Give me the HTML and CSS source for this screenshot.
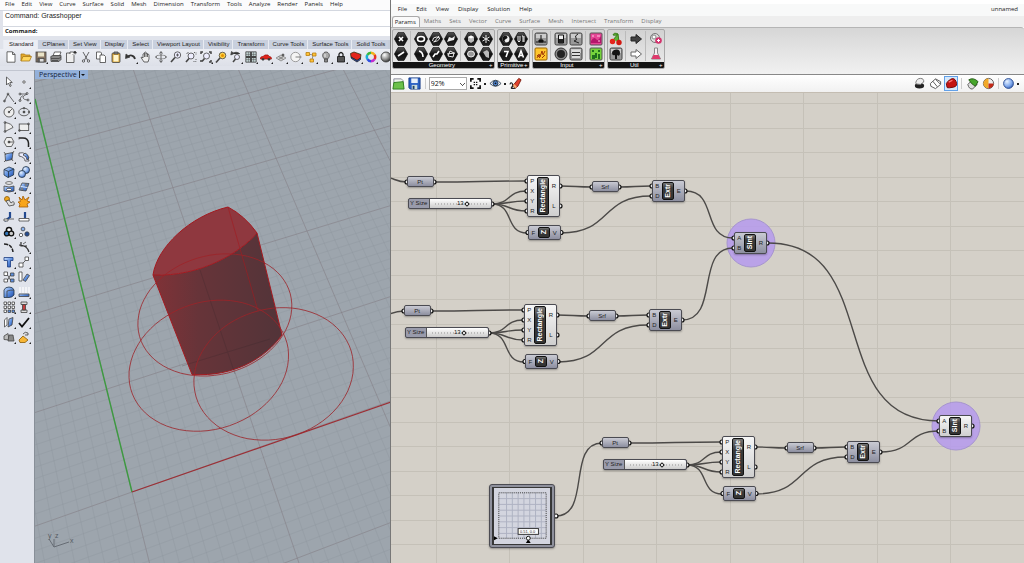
FILE: index.html
```html
<!DOCTYPE html>
<html lang="en">
<head>
<meta charset="utf-8">
<title>Rhino and Grasshopper</title>
<link rel="stylesheet" href="styles.css">
</head>
<body>
<svg class="defs" aria-hidden="true">
  <defs>
    <linearGradient id="hexFill" x1="0" y1="0" x2="0" y2="1"><stop offset="0" stop-color="#555"/><stop offset=".5" stop-color="#111"/><stop offset="1" stop-color="#222"/></linearGradient>
    <linearGradient id="blueFill" x1="0" y1="0" x2="1" y2="1"><stop offset="0" stop-color="#cfe2ff"/><stop offset=".5" stop-color="#5d8fe0"/><stop offset="1" stop-color="#1f4aa5"/></linearGradient>
    <radialGradient id="ballFill" cx=".35" cy=".3" r=".8"><stop offset="0" stop-color="#fff"/><stop offset=".5" stop-color="#999"/><stop offset="1" stop-color="#222"/></radialGradient>
    <radialGradient id="blueBall" cx=".35" cy=".3" r=".8"><stop offset="0" stop-color="#e8f2ff"/><stop offset=".6" stop-color="#7fa8ec"/><stop offset="1" stop-color="#2d55a8"/></radialGradient>
    <symbol id="hex" viewBox="0 0 14 14"><path d="M4 .6h6L13.6 7 10 13.4H4L.4 7z" fill="url(#hexFill)" stroke="#000" stroke-width=".6"/></symbol>
    <symbol id="tile" viewBox="0 0 14 14"><rect x="1" y="1" width="12" height="12" rx="1.5" fill="#999" stroke="#444"/><path d="M2 2h10v4H2z" fill="#ccc"/></symbol>
    <linearGradient id="bodyFill" x1="0" y1="0" x2="1" y2="0"><stop offset="0" stop-color="#813237"/><stop offset=".35" stop-color="#673439"/><stop offset="1" stop-color="#523439"/></linearGradient>
  </defs>
</svg>
<div class="desktop">
  <section class="rhino">
    <nav class="menu rhino-menu">
      <button>File</button><button>Edit</button><button>View</button><button>Curve</button><button>Surface</button><button>Solid</button><button>Mesh</button><button>Dimension</button><button>Transform</button><button>Tools</button><button>Analyze</button><button>Render</button><button>Panels</button><button>Help</button>
    </nav>
    <div class="command">
      <p class="history">Command: Grasshopper</p>
      <div class="prompt"><label for="cmd">Command:</label><input id="cmd" type="text"></div>
    </div>
    <nav class="rhino-tabs">
      <button class="active">Standard</button><button>CPlanes</button><button>Set View</button><button>Display</button><button>Select</button><button>Viewport Layout</button><button>Visibility</button><button>Transform</button><button>Curve Tools</button><button>Surface Tools</button><button>Solid Tools</button>
    </nav>
    <div class="toolbar">
      <button class="tool" aria-label="New"><svg viewBox="0 0 12 12"><path d="M2 .8h5.5L10 3.300V11.200H2z" fill="#fff"/><path d="M7.500 1v2.500H10"/></svg></button>
      <button class="tool" aria-label="Open"><svg viewBox="0 0 12 12"><path d="M1 10V3h3.500l1 1H10v2" fill="#e5a82a" stroke="#a87a17"/><path d="M1 10l2-4.500h8.500L9.500 10z" fill="#ffd65c" stroke="#a87a17"/></svg></button>
      <button class="tool more" aria-label="Save"><svg viewBox="0 0 12 12"><rect x="1" y="1" width="10" height="10" fill="#8a7866"/><rect x="3" y="1.500" width="6" height="4" fill="#e9e3c7" stroke="none"/><rect x="3" y="7.500" width="6" height="3.500" fill="#ddd"/><path d="M4 8v3" stroke-width="1.500"/></svg></button>
      <button class="tool" aria-label="Print"><svg viewBox="0 0 12 12"><path d="M3 5l1.500-4H11L9.500 5z" fill="#fff"/><path d="M.8 5.500L3 4.500h8v4l-2 2H1z" fill="#888"/><path d="M1 7.500h8l2-1.500M2 9.500h6"/></svg></button>
      <button class="tool" aria-label="Properties"><svg viewBox="0 0 12 12"><path d="M1.500 2h5L9 4.500V11.500H1.500z" fill="#eee"/><path d="M5 3V1h5v2.500" fill="#fff"/><path d="M10 0l1.500 2H8.500z" fill="#111"/></svg></button>
      <button class="tool" aria-label="Cut"><svg viewBox="0 0 12 12"><path d="M3 1l4.500 8M9 1L4.500 9"/><circle cx="3.500" cy="10" r="1.200"/><circle cx="8.500" cy="10" r="1.200"/></svg></button>
      <button class="tool" aria-label="Copy"><svg viewBox="0 0 12 12"><path d="M1.500 1h4l1 1v6h-5z" fill="#fff"/><path d="M5 4h4l1.500 1.500V11.500H5z" fill="#fff"/></svg></button>
      <button class="tool" aria-label="Paste"><svg viewBox="0 0 12 12"><rect x="2" y="2" width="8" height="9.500" rx="1" fill="#d9a437"/><rect x="3.500" y="4" width="5" height="6.500" fill="#fff5cd" stroke="none"/><path d="M4 1h4v2H4z" fill="#888"/></svg></button>
      <button class="tool more" aria-label="Undo"><svg viewBox="0 0 12 12"><path d="M2.500 6C5 3.500 9 4 10 8" stroke="#333" stroke-width="1.800"/><path d="M.5 7.500L1 3l4 3z" fill="#333"/></svg></button>
      <button class="tool" aria-label="Pan"><svg viewBox="0 0 12 12"><path d="M4 11L1 6.500q1-1 2 .5V3q1-1 1.500 0V1.500q1-1 1.500 0V2.500q1-1 1.500 0v1q1.500-1 1.500 1V8L8 11z" fill="#eee"/><path d="M4.500 3v3M6 2v4M7.500 3v3"/></svg></button>
      <button class="tool" aria-label="Rotate view"><svg viewBox="0 0 12 12"><ellipse cx="6" cy="6" rx="5" ry="2" stroke="#888"/><path d="M6 1v10M4.500 2.500L6 .5l1.500 2M4.500 9.500l1.500 2 1.500-2M2 4.500L.5 6 2 7.500M10 4.500L11.500 6 10 7.500"/></svg></button>
      <button class="tool" aria-label="Zoom"><svg viewBox="0 0 12 12"><circle cx="7.500" cy="4" r="3.200" fill="#eef"/><path d="M5 6.500L1 11" stroke-width="1.600"/><path d="M7.500 2.500v3M6 4h3"/></svg></button>
      <button class="tool" aria-label="Zoom window"><svg viewBox="0 0 12 12"><path d="M2 3V1.500h2M9 1.500h2V4M11 8v2.500H8" stroke-dasharray="1 1"/><circle cx="6" cy="5" r="3" fill="#eef"/><path d="M4 7.500L1 11" stroke-width="1.600"/></svg></button>
      <button class="tool more" aria-label="Zoom extents"><svg viewBox="0 0 12 12"><path d="M1 3V1h2M9 1h2v2M11 9v2H9M1 9v2" stroke-width="1.500"/><circle cx="6.500" cy="5" r="3" fill="#eef"/><path d="M4.500 7.500L2 10.500" stroke-width="1.600"/></svg></button>
      <button class="tool" aria-label="Zoom selected"><svg viewBox="0 0 12 12"><circle cx="7.500" cy="4.500" r="3.300" fill="#ffd24a"/><path d="M5 7L1 11.500" stroke-width="1.600"/><circle cx="7.500" cy="4.500" r="1.500" fill="#e59300" stroke="none"/></svg></button>
      <button class="tool more" aria-label="Undo view"><svg viewBox="0 0 12 12"><path d="M2 3c3-2.500 6-2 8 0M.8 4L1.500.5l2.500 2z" fill="#333"/><circle cx="7" cy="6" r="2.500" fill="#eef"/><path d="M5.500 8L3 11" stroke-width="1.500"/></svg></button>
      <button class="tool more" aria-label="Four views"><svg viewBox="0 0 12 12"><path d="M.8.8h10.400v10.400H.8z" fill="#bcc"/><path d="M6 1v10M1 6h10" stroke-width="1.800"/><path d="M3.500 1v10M8.500 1v10M1 3.500h10M1 8.500h10" stroke-width=".4"/></svg></button>
      <button class="tool more" aria-label="Vehicle"><svg viewBox="0 0 12 12"><path d="M.5 7q0-1.500 2.500-1.500L5 4h3l1 1.500q2.500 0 2.500 2V8H.5z" fill="#e0241c" stroke="#a51510"/><circle cx="3" cy="8.300" r="1" fill="#222"/><circle cx="9" cy="8.300" r="1" fill="#222"/></svg></button>
      <button class="tool more" aria-label="Construction plane"><svg viewBox="0 0 12 12"><path d="M1 7l5-3 5 3-5 3z" fill="#ccc" stroke="#888"/><path d="M3.500 5.500l5 3M8.500 5.500l-5 3" stroke="#777"/><circle cx="8" cy="4" r="1" fill="#777"/></svg></button>
      <button class="tool more" aria-label="Set view"><svg viewBox="0 0 12 12"><circle cx="5.500" cy="6" r="4.700" fill="#f4f4f4" stroke="#888"/><path d="M5.500 6h6" stroke="#666"/></svg></button>
      <button class="tool more" aria-label="Object snap"><svg viewBox="0 0 12 12"><path d="M3 3l5 1-1 5" stroke="#777"/><path d="M1 1.500h3.500v3H1zM7.500 2H11v3H7.500zM5 8h3.500v3H5z" fill="#ffc237" stroke="#b87d10"/></svg></button>
      <button class="tool more" aria-label="Lights"><svg viewBox="0 0 12 12"><path d="M4.500 8C1 5 3 1 6 1s5 4 1.500 7z" fill="#aaa"/><path d="M4.500 8h3v3h-3z" fill="#888"/><path d="M5 3v3" stroke="#fff"/></svg></button>
      <button class="tool more" aria-label="Lock"><svg viewBox="0 0 12 12"><path d="M4 6V3q2-3 4 0v3" stroke="#222" stroke-width="1.300"/><path d="M2.500 5.500h7v5.500h-7z" fill="#555" stroke="#111"/></svg></button>
      <button class="tool more" aria-label="Layers"><svg viewBox="0 0 12 12"><path d="M.5 2.500L4 1l7 2.500-.5 3.500L7 9.500 1 6z" fill="#e2251c" stroke="#331"/><path d="M1 6l6 3.500L10.500 7v1.500L7 11 1.500 7.500z" fill="#3058c8" stroke="#222"/></svg></button>
      <button class="tool more" aria-label="Colors"><svg viewBox="0 0 12 12"><g stroke-width="2.500"><path d="M6 1.800A4.200 4.200 0 0 1 9.600 3.900" stroke="#f2b21b"/><path d="M9.600 3.900a4.200 4.200 0 0 1 0 4.200" stroke="#e8331f"/><path d="M9.600 8.100A4.200 4.200 0 0 1 6 10.200" stroke="#c22bd0"/><path d="M6 10.200A4.200 4.200 0 0 1 2.400 8.100" stroke="#3050e0"/><path d="M2.400 8.100a4.200 4.200 0 0 1 0-4.200" stroke="#1bb0d8"/><path d="M2.400 3.900A4.200 4.200 0 0 1 6 1.800" stroke="#39b93a"/></g></svg></button>
      <button class="tool" aria-label="Render"><svg viewBox="0 0 12 12"><circle cx="6" cy="6" r="5" fill="url(#ballFill)" stroke="#333"/></svg></button>
    </div>
    <div class="workspace">
      <div class="sidebar">
        <button class="tool" aria-label="Pointer"><svg viewBox="0 0 12 12"><path d="M3.500 1v8l2-2 1.500 3.500 1.200-.6L6.800 6.500h2.500z" fill="#fff"/></svg></button>
        <button class="tool more" aria-label="Point"><svg viewBox="0 0 12 12"><circle cx="6" cy="6" r="1.200" fill="#fff"/></svg></button>
        <button class="tool more" aria-label="Polyline"><svg viewBox="0 0 12 12"><path d="M1 11l4-8 3 4 3 4"/><circle cx="1.500" cy="10" r=".9"/><circle cx="5" cy="3" r=".9"/></svg></button>
        <button class="tool more" aria-label="Control curve"><svg viewBox="0 0 12 12"><path d="M2 3h7q-5 2-4 4t5 2M2 9.500q0-4 3-5" stroke-width=".7"/><circle cx="2" cy="3" r="1"/><circle cx="9" cy="2.500" r="1"/><circle cx="2" cy="9.500" r="1"/><circle cx="10" cy="9" r="1"/></svg></button>
        <button class="tool more" aria-label="Circle"><svg viewBox="0 0 12 12"><circle cx="6" cy="6" r="5" fill="#eee"/><path d="M6 6l3-3"/><circle cx="6" cy="6" r=".8" fill="#333"/></svg></button>
        <button class="tool more" aria-label="Ellipse"><svg viewBox="0 0 12 12"><ellipse cx="6" cy="6" rx="5.200" ry="3.800"/><circle cx="6" cy="6" r="1" fill="#333"/><circle cx="6" cy="2.200" r=".8"/><circle cx="11" cy="6" r=".8"/></svg></button>
        <button class="tool more" aria-label="Arc"><svg viewBox="0 0 12 12"><path d="M2 1.500q7 1 8 5L2 10.500z" fill="#eee"/><circle cx="2" cy="1.500" r=".9"/><circle cx="2" cy="10.500" r=".9"/></svg></button>
        <button class="tool more" aria-label="Rectangle"><svg viewBox="0 0 12 12"><rect x="1.200" y="3" width="9.500" height="6.500" fill="#eee"/><circle cx="1.500" cy="9.500" r=".9"/><circle cx="10.500" cy="3" r=".9"/></svg></button>
        <button class="tool more" aria-label="Polygon"><svg viewBox="0 0 12 12"><path d="M3.500 1.500h5L11 6l-2.500 4.500h-5L1 6z" fill="#eee"/><path d="M6 6h4"/><circle cx="6" cy="6" r="1" fill="#333"/></svg></button>
        <button class="tool more" aria-label="Fillet"><svg viewBox="0 0 12 12"><path d="M1 2h4q5 0 5.500 5v4" stroke="#222" stroke-width="1.500"/><path d="M1 3.500V1"/></svg></button>
        <button class="tool more" aria-label="Surface"><svg viewBox="0 0 12 12"><path d="M2 3l8-1.500-1 7L2.500 10z" fill="url(#blueFill)"/><path d="M1 1l2 3M11 0L9 3M1 11l2-2M10 10L8 7"/></svg></button>
        <button class="tool more" aria-label="Revolve"><svg viewBox="0 0 12 12"><path d="M1 2q8-2 10 8H7Q7 6 1 5z" fill="#eef"/><path d="M5 4q4 1 4 5l2-2Q10 3 7 2z" fill="url(#blueFill)"/></svg></button>
        <button class="tool more" aria-label="Box"><svg viewBox="0 0 12 12"><path d="M1 3.500L6 1l5 2-.5 6L5 11.500 1 9z" fill="url(#blueFill)" stroke="#234"/><path d="M1 3.500L5.500 5.500 11 3M5.500 5.500v6" stroke="#234"/></svg></button>
        <button class="tool more" aria-label="Sphere"><svg viewBox="0 0 12 12"><circle cx="8" cy="4" r="3.500" fill="url(#blueBall)" stroke="#234"/><circle cx="4" cy="8" r="3.500" fill="url(#blueBall)" stroke="#234"/></svg></button>
        <button class="tool more" aria-label="Cylinder"><svg viewBox="0 0 12 12"><ellipse cx="6" cy="2" rx="3.500" ry="1.300" fill="#fff"/><path d="M1 5q5 2 10 0v5q-5 2-10 0z" fill="url(#blueFill)"/><ellipse cx="6" cy="8.500" rx="2.500" ry="1.200" fill="#fff"/></svg></button>
        <button class="tool more" aria-label="Patch"><svg viewBox="0 0 12 12"><path d="M4 2l7 .5L8 10 1 9z" fill="url(#blueFill)"/><path d="M2.500 5.500l7 1" stroke="#fff"/><circle cx="4" cy="8" r="1" fill="#fff"/><circle cx="8" cy="4" r="1" fill="#fff"/></svg></button>
        <button class="tool" aria-label="Boolean"><svg viewBox="0 0 12 12"><circle cx="4" cy="3" r="2.500" fill="#f0a91f" stroke="#8a5a06"/><path d="M3 5l3 5 5-1q1-3-1-3.500L8 7 6 4z" fill="#ddd"/></svg></button>
        <button class="tool" aria-label="Explode"><svg viewBox="0 0 12 12"><path d="M1 1l3 3 1-4 2 4 4-3-2 4 3 1-3 2 1 3H1l1-3-2-2 2.500-.5z" fill="#f8a51b" stroke="#a35a04"/></svg></button>
        <button class="tool" aria-label="Trim"><svg viewBox="0 0 12 12"><path d="M7 1v6M2 10l5-4" stroke="#234a90" stroke-width="2.200"/><path d="M1 8h4v2H1zM6 8h5" fill="#fff"/></svg></button>
        <button class="tool" aria-label="Split"><svg viewBox="0 0 12 12"><path d="M7 1v6" stroke="#234a90" stroke-width="2.200"/><path d="M1 7.500h10v2.500H1z" fill="#fff"/></svg></button>
        <button class="tool more" aria-label="Join"><svg viewBox="0 0 12 12"><circle cx="6" cy="4" r="2.600" fill="#fff" stroke="#111" stroke-width="1.500"/><circle cx="3.800" cy="7.500" r="2.400" fill="#37b" stroke="#111" stroke-width="1.300"/><circle cx="8.300" cy="7.500" r="2.400" fill="#ccc" stroke="#111" stroke-width="1.300"/></svg></button>
        <button class="tool" aria-label="Group"><svg viewBox="0 0 12 12"><circle cx="5" cy="3" r="1.900" fill="#8ab2ee"/><circle cx="3" cy="9" r="1.700" fill="#fff"/><circle cx="9" cy="8" r="2.200" fill="#234a90"/></svg></button>
        <button class="tool" aria-label="Extend"><svg viewBox="0 0 12 12"><path d="M1 3q8 0 9 8" stroke="#222" stroke-width="1.500" stroke-dasharray="4 1"/></svg></button>
        <button class="tool more" aria-label="Blend"><svg viewBox="0 0 12 12"><path d="M3 1v4h6M1 4q8 0 10 7" stroke="#333" stroke-width="1.200"/><path d="M5 3l3-2"/></svg></button>
        <button class="tool more" aria-label="Text"><svg viewBox="0 0 12 12"><path d="M1 1.500h9v3H7.500V11h-3V4.500H1z" fill="url(#blueFill)" stroke="#1c3c80"/></svg></button>
        <button class="tool more" aria-label="Move"><svg viewBox="0 0 12 12"><path d="M1 7h4v4H1zM7 1h3.500v3.500H7z" fill="#fff"/><path d="M5 7l2-2"/></svg></button>
        <button class="tool" aria-label="Copy objects"><svg viewBox="0 0 12 12"><path d="M1 1h3.500v3.500H1zM1 8h3.500v3H1z" fill="#fff"/><path d="M7.500 2H11v3H7.500zM7.500 8H11v3H7.500z" fill="#5d8fe0"/><path d="M4.500 4l3 5M4.500 9l3-5"/></svg></button>
        <button class="tool" aria-label="Rotate"><svg viewBox="0 0 12 12"><path d="M1 1h3v9H1z" fill="#fff"/><path d="M9 3l2.500 1.500-4 6L5 9z" fill="url(#blueFill)"/></svg></button>
        <button class="tool more" aria-label="Solid edit"><svg viewBox="0 0 12 12"><path d="M1 4q1-3 5-3t5 3v5q-2 2.500-5 2.500H1z" fill="url(#blueFill)" stroke="#234"/><path d="M4 11V5q3-1 7-1"/></svg></button>
        <button class="tool more" aria-label="Drape"><svg viewBox="0 0 12 12"><path d="M2 1v6M5 1v6M8 1v6M11 1v6" stroke="#fff" stroke-width="1.200"/><path d="M1 8h10v2.500H1z" fill="url(#blueFill)"/></svg></button>
        <button class="tool more" aria-label="Array"><svg viewBox="0 0 12 12"><g fill="#fff"><path d="M1 1h2.500v2.500H1zM5 1h2.500v2.500H5zM9 1h2.500v2.500H9zM1 5h2.500v2.500H1zM5 5h2.500v2.500H5zM9 5h2.500v2.500H9zM1 9h2.500v2.500H1z"/><path d="M5 9h2.500v2.500H5zM9 9h2.500v2.500H9z" fill="#5d8fe0"/></g></svg></button>
        <button class="tool more" aria-label="Align"><svg viewBox="0 0 12 12"><path d="M3 1h6v2.500H3zM3 9h6v2.500H3z" fill="#ddd"/><path d="M4.500 3.500h3V9h-3z" fill="#c33d3d"/></svg></button>
        <button class="tool more" aria-label="Cage"><svg viewBox="0 0 12 12"><path d="M1.500 4L4 1.500V9L1.500 11z" fill="#fff"/><path d="M6 3l4-1.500L9 9l-4 2z" fill="url(#blueFill)"/></svg></button>
        <button class="tool more" aria-label="Check"><svg viewBox="0 0 12 12"><path d="M1 7l3 3.500L11 2" stroke="#111" stroke-width="1.800"/></svg></button>
        <button class="tool more" aria-label="Shade"><svg viewBox="0 0 12 12"><path d="M1 5l4-2.500L6 9 1 8.500z" fill="#bbb"/><path d="M6 4h4l1 6H5z" fill="#888"/></svg></button>
        <button class="tool more" aria-label="Hatch"><svg viewBox="0 0 12 12"><path d="M1 9l4-4 5 4-3 2.500H2z" fill="#f7b636" stroke="#8a5a06"/><path d="M5 3q2-3 5-1v2H7" fill="#ddd"/></svg></button>
      </div>
      <div class="viewport">
        <svg class="scene" id="scene"></svg>
        <button class="view-title">Perspective <span class="caret"></span></button>
      </div>
    </div>
  </section>

  <section class="gh">
    <header class="gh-head">
      <nav class="menu gh-menu"><button>File</button><button>Edit</button><button>View</button><button>Display</button><button>Solution</button><button>Help</button></nav>
      <span class="doc">unnamed</span>
    </header>
    <nav class="gh-tabs">
      <button class="active">Params</button><button>Maths</button><button>Sets</button><button>Vector</button><button>Curve</button><button>Surface</button><button>Mesh</button><button>Intersect</button><button>Transform</button><button>Display</button>
    </nav>
    <div class="ribbon">
      <div class="panel">
        <div class="panel-icons">
          <div class="col">
            <button aria-label="Point param"><svg viewBox="0 0 14 14"><use href="#hex"/><path class="w2" d="M5 5l4 4M9 5L5 9"/></svg></button>
            <button aria-label="Line param"><svg viewBox="0 0 14 14"><use href="#hex"/><path class="w2" d="M4 9l6-4"/></svg></button>
          </div>
          <div class="col cols3">
            <button aria-label="Circle param"><svg viewBox="0 0 14 14"><use href="#hex"/><ellipse class="w2" cx="7" cy="7" rx="3.500" ry="2.500"/></svg></button>
            <button aria-label="Curve param"><svg viewBox="0 0 14 14"><use href="#hex"/><path class="w1" d="M3.500 9q0-4 4-4t3 2-6 3M5 10l5-6"/></svg></button>
            <button aria-label="Plane param"><svg viewBox="0 0 14 14"><use href="#hex"/><path d="M3 10l2-5 3 1 3-2-1 4-4 1z" fill="#eee"/></svg></button>
            <button aria-label="Arc param"><svg viewBox="0 0 14 14"><use href="#hex"/><path class="w2" d="M5 4q4 1 4 6"/></svg></button>
            <button aria-label="Polyline param"><svg viewBox="0 0 14 14"><use href="#hex"/><path class="w2" d="M4 10l2-3 2 0 2-3"/></svg></button>
            <button aria-label="Rectangle param"><svg viewBox="0 0 14 14"><use href="#hex"/><path class="w1" d="M4 9l2-5 4 2-1 4zM3 7l8-1"/></svg></button>
          </div>
          <div class="col cols2">
            <button aria-label="Box param"><svg viewBox="0 0 14 14"><use href="#hex"/><path d="M4 5l3-1.500L10 5v4l-3 2-3-2z" fill="#bbb"/><path d="M4 5l3 1.500L10 5 7 3.500z" fill="#fff"/></svg></button>
            <button aria-label="Mesh param"><svg viewBox="0 0 14 14"><use href="#hex"/><path class="w1" d="M7 3v8M3.500 5l7 4M10.500 5l-7 4"/></svg></button>
            <button aria-label="Brep param"><svg viewBox="0 0 14 14"><use href="#hex"/><ellipse cx="7" cy="7" rx="3.500" ry="3" fill="#999" stroke="#eee"/></svg></button>
            <button aria-label="Surface param"><svg viewBox="0 0 14 14"><use href="#hex"/><path d="M4 5l4-2 2 2v6l-3-1z" fill="#bbb"/></svg></button>
          </div>
        </div>
        <div class="panel-name">Geometry<span>+</span></div>
      </div>
      <div class="panel">
        <div class="panel-icons">
          <div class="col cols2">
            <button aria-label="Boolean param"><svg viewBox="0 0 14 14"><use href="#hex"/><circle cx="7" cy="7" r="3.500" fill="#eee"/><path d="M7 3.500q3 2 0 3.500t0 3.500a3.500 3.500 0 0 1 0-7" fill="#111"/></svg></button>
            <button aria-label="Integer param"><svg viewBox="0 0 14 14"><use href="#hex"/><path class="w1" d="M4 4v5q1 2 2 0V4M8 4h1v6M10 4v6"/></svg></button>
            <button aria-label="Number param"><svg viewBox="0 0 14 14"><use href="#hex"/><path class="w2" d="M5 4.500h4L7 10"/></svg></button>
            <button aria-label="Text param"><svg viewBox="0 0 14 14"><use href="#hex"/><path class="w2" d="M4.500 10.500L7 4l2.500 6.500M5.500 8.500h3"/></svg></button>
          </div>
        </div>
        <div class="panel-name">Primitive<span>+</span></div>
      </div>
      <div class="panel">
        <div class="panel-icons">
          <div class="col">
            <button aria-label="Slider input"><svg viewBox="0 0 14 14"><use href="#tile"/><path d="M2 10h10M7 3v5M5 8h4v2H5z" stroke="#111" fill="#111"/></svg></button>
            <button aria-label="Graph mapper"><svg viewBox="0 0 14 14"><rect x="1" y="1" width="12" height="12" rx="1" fill="#ffc62e" stroke="#9a6500"/><path d="M3 11l2-4 1 3 2-6 1 4 2-4M3 8l3 3M8 11l3-3" stroke="#a33b08" fill="none"/></svg></button>
          </div>
          <div class="col cols2">
            <button aria-label="Button input"><svg viewBox="0 0 14 14"><use href="#tile"/><path d="M4.500 3h5v8h-5z" fill="#eee" stroke="#111"/><path d="M5 7h4v4H5z" fill="#222"/></svg></button>
            <button aria-label="Gradient input"><svg viewBox="0 0 14 14"><use href="#tile"/><path d="M9 2q-4 2-2 4t-2 3l5 2" stroke="#222" fill="none"/></svg></button>
            <button aria-label="Knob input"><svg viewBox="0 0 14 14"><circle cx="7" cy="7" r="6" fill="#888" stroke="#333"/><circle cx="7" cy="7" r="4" fill="#222"/></svg></button>
            <button aria-label="Value list"><svg viewBox="0 0 14 14"><use href="#tile"/><path d="M3 4h8M3 7h8M3 10h8" stroke="#ddd" stroke-width="2"/><path d="M3 5.500h8M3 8.500h8" stroke="#333"/></svg></button>
          </div>
          <div class="col">
            <button aria-label="Image sampler"><svg viewBox="0 0 14 14"><rect x="1" y="1" width="12" height="12" rx="1" fill="#e54595" stroke="#555"/><path d="M2 9q3-5 5-2t5-3v7H2z" fill="#b5166b"/><path d="M3 4h2M8 4h3M9 9h2" stroke="#ffc6e2"/></svg></button>
            <button aria-label="Import image"><svg viewBox="0 0 14 14"><rect x="1" y="1" width="12" height="12" rx="1" fill="#74d33c" stroke="#555"/><path d="M3 3h2v2H3zM9 3h2v2H9zM6 6h2v5H6zM3 8h3v4H3zM9 7h2v5H9z" fill="#1f6f1e"/></svg></button>
          </div>
        </div>
        <div class="panel-name">Input<span>+</span></div>
      </div>
      <div class="panel">
        <div class="panel-icons">
          <div class="col">
            <button aria-label="Cherry picker"><svg viewBox="0 0 14 14"><path d="M4 8l5-6 1 8M9 2q-4-2-5 1 3 1 5-1" stroke="#3c7d1d" fill="#5fb335"/><circle cx="3.500" cy="9.500" r="2.700" fill="#e5251d"/><circle cx="10" cy="10.500" r="2.700" fill="#d11811"/></svg></button>
            <button aria-label="Param viewer"><svg viewBox="0 0 14 14"><use href="#tile"/><path d="M6 12V8Q3 9 3 6t4-3.500T11 6 8 8v4z" fill="#151515"/></svg></button>
          </div>
          <div class="col wide">
            <button aria-label="Relay"><svg viewBox="0 0 14 14"><path d="M2 5h5V2.500L12.500 7 7 11.500V9H2z" fill="#444" stroke="#222"/></svg></button>
            <button aria-label="Jump"><svg viewBox="0 0 14 14"><path d="M2 5h5V2.500L12.500 7 7 11.500V9H2z" fill="#fff" stroke="#666"/></svg></button>
          </div>
          <div class="col">
            <button aria-label="Cluster"><svg viewBox="0 0 14 14"><circle cx="6" cy="6" r="4.500" fill="#ddd" stroke="#777"/><circle cx="9.500" cy="8.500" r="3.300" fill="#d3336d"/><circle cx="5" cy="5" r="2" fill="#fff" stroke="#888"/><path d="M8 8.500h3M9.500 7v3" stroke="#fff"/></svg></button>
            <button aria-label="Galapagos"><svg viewBox="0 0 14 14"><path d="M5.500 1v5L2.500 12h9L8.500 6V1z" fill="#f7eef2" stroke="#888"/><path d="M4.500 8h5l2 4h-9z" fill="#df3a6c"/></svg></button>
          </div>
        </div>
        <div class="panel-name">Util<span>+</span></div>
      </div>
    </div>
    <div class="gh-tools">
      <button class="tb" aria-label="Open file"><svg viewBox="0 0 14 14"><path d="M2 12V2h8l2 2v8z" fill="#eef4ea" stroke="#889"/><path d="M1 13l1-7 10-1 1 8z" fill="#6cc04a" stroke="#2d7d1d"/></svg></button>
      <button class="tb" aria-label="Save file"><svg viewBox="0 0 14 14"><path d="M1 1h12v12H2.500L1 11.500z" fill="#2c62c4" stroke="#163a85"/><path d="M3.500 1.500h7v5h-7z" fill="#e8f0fb"/><path d="M4 8.500h6V13H4z" fill="#cdd"/><path d="M5 9.500h2V13H5z" fill="#246"/></svg></button>
      <span class="rule"></span>
      <select class="zoom" aria-label="Zoom level"><option>92%</option></select>
      <button class="tb drop" aria-label="Zoom extents"><svg viewBox="0 0 14 14"><path d="M2 5V2h3M9 2h3v3M12 9v3H9M5 12H2V9" fill="none" stroke="#111" stroke-width="1.800"/><path d="M5 5h1.500v1.500H5zM7.500 5H9v1.500H7.500zM5 7.500h1.500V9H5zM7.500 7.500H9V9H7.500z" fill="#111"/></svg></button>
      <button class="tb drop" aria-label="Preview"><svg viewBox="0 0 14 14"><path d="M1 7q6-7 12 0-6 6-12 0z" fill="#f3f7ff" stroke="#345"/><circle cx="7" cy="6.800" r="2.700" fill="#4f86d6" stroke="#234"/><circle cx="7" cy="6.800" r="1" fill="#111"/></svg></button>
      <button class="tb" aria-label="Sketch"><svg viewBox="0 0 14 14"><path d="M1 8q1-3 2.500-1t-.5 4 4 1" stroke="#222" stroke-width="1.300" fill="none"/><path d="M4.500 9L10.500 1.500l2.500 1.500-3.500 7-3 2z" fill="#e0402c" stroke="#7b1d10"/><path d="M4.500 9l1-1.500 3 3-2 1.500z" fill="#f5b070"/></svg></button>
      <span class="spacer"></span>
      <button class="tb" aria-label="No preview"><svg viewBox="0 0 14 14"><ellipse cx="7" cy="9.500" rx="5" ry="3" fill="#222"/><path d="M3 6q1-4.500 5-4.500t3.500 4L8 8 3.500 7.500z" fill="#eee" stroke="#777"/></svg></button>
      <button class="tb" aria-label="Wireframe preview"><svg viewBox="0 0 14 14"><path d="M1.500 7L7 2l5.500 3v3L7 12.500 2 10z" fill="#fff" stroke="#555"/><path d="M4 4.500l5 6M7 2.500l5 5" stroke="#555"/></svg></button>
      <button class="tb selected" aria-label="Shaded preview"><svg viewBox="0 0 14 14"><path d="M1.500 7Q2 5 6 2.500t6 2.500-3 6-6.500.500q-1-2-1-4.500z" fill="#c31312" stroke="#6f0605"/><path d="M4 5.500L8 3.500" stroke="#f77" stroke-width="1.500"/></svg></button>
      <span class="rule"></span>
      <button class="tb" aria-label="Selected preview"><svg viewBox="0 0 14 14"><path d="M2 8l4-4 6 4-5 5q-4 0-5-5z" fill="#ddd" stroke="#555"/><path d="M3 3q5-3 10 2l-3 5-4-3z" fill="#46a52b" stroke="#245a16"/></svg></button>
      <button class="tb" aria-label="Document preview"><svg viewBox="0 0 14 14"><circle cx="7" cy="7" r="5.500" fill="#eee" stroke="#555"/><path d="M7 1.500v11A5.500 5.500 0 0 1 7 1.500" fill="#f2a928"/><path d="M7 7h5.500A5.500 5.500 0 0 1 7 12.500z" fill="#c22918"/></svg></button>
      <span class="rule"></span>
      <button class="tb drop" aria-label="Mesh quality"><svg viewBox="0 0 14 14"><circle cx="7" cy="7" r="5.300" fill="url(#blueBall)" stroke="#2a4d92"/></svg></button>
    </div>
    <div class="canvas" id="canvas"><svg class="wires" id="wires"></svg></div>
  </section>
</div>
<script src="app.js"></script>
</body>
</html>
```

FILE: styles.css
```css
* { box-sizing: border-box; }
html, body { height: 100%; margin: 0; }
body { font: 6px/8px "Open Sans", "Noto Sans", sans-serif; color: #222; overflow: hidden; }
button { font: inherit; color: inherit; background: none; border: 0; padding: 0; margin: 0; }
.defs { position: absolute; width: 0; height: 0; }
.desktop { display: flex; height: 100vh; }

.rhino { flex: 390 1 0; min-width: 0; display: flex; flex-direction: column; background: #e0e3eb; overflow: hidden; }
.menu { display: flex; align-items: flex-start; white-space: nowrap; }
.rhino-menu { gap: 7px; padding: 0 5px; height: 10px; background: #fbfbfc; }
.command { padding-left: 3px; border-top: 1px solid #d4d8e0; }
.history { margin: 0; height: 15px; padding-left: 2px; background: #fff; line-height: 9px; font-family: "Liberation Sans", sans-serif; font-size: 7px; }
.prompt { display: flex; gap: 3px; height: 10px; padding-left: 2px; background: #fff; border-top: 1px solid #d4d8e0; font: bold 6px/9px "Open Sans", sans-serif; }
.prompt input { flex: 1; min-width: 0; border: 0; padding: 0; height: 8px; outline: 0; font: inherit; }
.rhino-tabs { display: flex; margin-top: 4px; margin-left: 3px; height: 9px; background: #c7ceda; white-space: nowrap; font: 6px/9px "Liberation Sans", sans-serif; overflow: hidden; }
.rhino-tabs button { padding: 0 3px 0 4px; flex: none; border-left: 1px solid #e8ebf2; background: #c9d0de; }
.rhino-tabs .active { background: #eceef4; padding: 0 4px 0 5px; }
.toolbar { display: flex; gap: 2px; padding: 0 4px; height: 17px; background: linear-gradient(#eceef4, #dde0e8); overflow: hidden; }
.tool { position: relative; flex: none; width: 13px; height: 15px; display: grid; place-items: center; }
.tool svg { width: 12px; height: 12px; fill: none; stroke: #444; stroke-width: .8; }
.more::after { content: ""; position: absolute; right: -1px; bottom: 0; border: 1px solid #222; border-top-color: transparent; border-left-color: transparent; }
.workspace { flex: 1; min-height: 0; display: flex; margin-top: 4px; }
.sidebar { flex: none; width: 34px; padding: 3px 3px 0 2px; display: grid; grid-template-columns: repeat(2, 13px); column-gap: 2px; align-content: start; border-top: 1px solid #c2c6d0; }
.viewport { flex: 1; position: relative; overflow: hidden; background: #9da5ad; border-left: 1px solid #888f98; }
.scene { display: block; width: 100%; height: 100%; }
.view-title { position: absolute; left: 0; top: 0; height: 9px; padding: 0 3px 0 4px; background: #94b1da; color: #15233a; font: 7px/9px "Open Sans", sans-serif; display: flex; align-items: center; gap: 4px; }
.caret { border: 2px solid transparent; border-top-color: #111; border-bottom: 0; }
.caret::before { content: ""; position: absolute; top: 1px; height: 7px; margin-left: -4px; border-left: 1px solid #333; }
.scene text { font: 7px "Liberation Sans", sans-serif; fill: #555b63; }
.minor { stroke: #8f979f; stroke-width: 1; opacity: .4; }
.major { stroke: #858087; stroke-width: 1; opacity: .6; }
.ring { fill: none; stroke: #9e2328; stroke-width: 1; opacity: .8; }
.edge { fill: none; stroke: #a31a20; stroke-width: 1; }

.gh { flex: 634 1 0; min-width: 0; display: flex; flex-direction: column; border-left: 1px solid #777; background: #fff; }
.gh-head { display: flex; justify-content: space-between; align-items: flex-start; padding: 1px 6px 0 7px; margin-top: 4px; height: 12px; background: #f8f9f9; }
.gh-menu { gap: 9px; }
.gh-tabs { display: flex; height: 11px; padding-left: 1px; background: #eee; color: #777; white-space: nowrap; }
.gh-tabs button { padding: 0 4px; flex: none; line-height: 11px; }
.gh-tabs .active { background: #fafafa; color: #222; border: 1px solid #aaa; border-bottom: 0; border-radius: 3px 3px 0 0; padding: 0 3px 0 2px; line-height: 10px; }
.ribbon { display: flex; gap: 2px; padding: 1px 1px 0; height: 48px; border-top: 1px solid #b5b5b5; border-bottom: 1px solid #888; border-radius: 0 3px 0 0; background: linear-gradient(#d6d6d6, #f1f1f1); }
.panel { display: flex; flex-direction: column; height: 40px; border: 1px solid #a8a8a8; border-radius: 2px; background: linear-gradient(#d2d2d2, #ececec); overflow: hidden; }
.panel-icons { display: flex; padding: 1px; flex: 1; }
.col { display: grid; grid-template-columns: 14px; grid-auto-rows: 15px; column-gap: 1px; padding: 0 2px 0 0; }
.col + .col { padding-left: 3px; border-left: 1px solid #bbb; }
.col:last-child { padding-right: 0; }
.cols2 { grid-template-columns: repeat(2, 14px); }
.cols3 { grid-template-columns: repeat(3, 14px); }
.col button { display: grid; place-items: center; }
.col svg { width: 14px; height: 14px; }
.w1 { fill: none; stroke: #eee; stroke-width: 1; }
.w2 { fill: none; stroke: #fff; stroke-width: 1.6; }
.panel-name { display: flex; justify-content: space-between; height: 7px; padding: 0 1px 0 2px; background: #141414; color: #fff; font: 6px/7px "Liberation Sans", sans-serif; }
.panel-name::before { content: ""; }
.gh-tools { display: flex; align-items: center; gap: 2px; height: 17px; padding: 0 4px 0 1px; background: linear-gradient(#fff, #f1f1f1); }
.tb { width: 14px; height: 15px; display: grid; place-items: center; flex: none; }
.tb svg { width: 13px; height: 13px; }
.drop { width: 18px; position: relative; justify-content: start; }
.drop::after { content: ""; position: absolute; right: 1px; top: 7px; width: 2px; height: 2px; background: #222; }
.selected { border: 1px solid #62a1e8; background: #d6e8fb; }
.rule { width: 1px; height: 11px; background: #ccc; margin: 0 1px; }
.spacer { flex: 1; }
.zoom { appearance: none; width: 38px; height: 13px; margin: 0; padding: 0 1px; border: 1px solid #aaa; border-radius: 0; font: 7px "Open Sans", sans-serif; color: #111; background: linear-gradient(45deg, transparent 45%, #555 45% 60%, transparent 60%) 30px 5px / 3px 3px no-repeat, linear-gradient(-45deg, transparent 45%, #555 45% 60%, transparent 60%) 32px 5px / 3px 3px no-repeat, #fff; }
.canvas { flex: 1; position: relative; overflow: hidden; background: #d4d0c8; border-top: 1px solid #c4bdb2; }
.wires { position: absolute; inset: 0; width: 100%; height: 100%; }
.grid-line { stroke: #c5c1b8; stroke-width: 1; }
.wire { fill: none; stroke: #4c4a48; stroke-width: 1.4; }
.port { fill: #fff; stroke: #111; stroke-width: 1.2; }
.halo { fill: #b69bee; opacity: .85; stroke: #9f8bd0; stroke-width: 1; }
.node { position: absolute; display: flex; width: 33px; border: 1px solid #4b4b52; border-radius: 2px; background: linear-gradient(#c9cad3, #8d8fa0); box-shadow: 0 1px 2px rgba(0, 0, 0, .3); font: 6px/6px "Liberation Sans", sans-serif; color: #222; }
.node.light { background: linear-gradient(#f6f6f6, #cfcfcf); }
.side { flex: 1; display: flex; flex-direction: column; }
.side span { flex: 1; display: grid; place-items: center; }
.core { width: 12px; margin: 1px 0; border: 1px solid #111; border-radius: 2px; background: linear-gradient(#777, #3a3a3a 30%, #333); color: #fff; display: grid; place-items: center; }
.core b { writing-mode: vertical-rl; rotate: 180deg; font: bold 7px/8px "Liberation Sans", sans-serif; }
.tall { height: 42px; }
.mid { height: 22px; }
.short { height: 15px; }
.param { width: 27px; height: 11px; display: grid; place-items: center; }
.slider { width: 84px; height: 11px; background: #999bab; }
.slider label { width: 21px; text-align: center; line-height: 9px; border-right: 1px solid #555; }
.slider .track { flex: 1; position: relative; background: linear-gradient(#fff, #ccc); border-radius: 0 2px 2px 0; }
.slider input { appearance: none; display: block; width: 100%; height: 9px; margin: 0; background: repeating-linear-gradient(90deg, #bbb 0 1px, transparent 1px 3px) 5px 4px / 52px 2px no-repeat; }
.slider input::-webkit-slider-thumb { appearance: none; width: 4px; height: 4px; background: #fff; border: 1px solid #111; rotate: 45deg; }
.slider output { position: absolute; right: 27px; top: 0; line-height: 9px; font-size: 6px; }
.pad { width: 66px; height: 64px; padding: 2px; background: #8e909c; border-radius: 3px; }
.pad svg { display: block; width: 100%; height: 100%; }
.pad text { font: 4px "Liberation Sans", sans-serif; fill: #222; }
```

FILE: app.js
```js
const NS = "http://www.w3.org/2000/svg";
function svg(parent, tag, attrs, text) {
  const el = document.createElementNS(NS, tag);
  for (const k in attrs) el.setAttribute(k, attrs[k]);
  if (text) el.textContent = text;
  parent.appendChild(el);
  return el;
}

/* Perspective viewport: world plane (u, v) projected to the view. */
const scene = document.getElementById("scene");
const ox = 35, oy = 70;
function project(u, v) {
  const w = 1 + 0.03015 * u + 0.06859 * v;
  return [(132 + 135.84 * u - 18.03 * v) / w - ox, (492 - 31.52 * u - 76.17 * v) / w - oy];
}
function planeLine(u1, v1, u2, v2, cls) {
  const a = project(u1, v1), b = project(u2, v2);
  svg(scene, "line", { x1: a[0].toFixed(1), y1: a[1].toFixed(1), x2: b[0].toFixed(1), y2: b[1].toFixed(1), class: cls });
}
for (let i = -30; i <= 80; i++) {
  const cls = i % 10 === 0 ? "major" : "minor";
  planeLine(i / 10, -3, i / 10, 9, cls);
  planeLine(-3, i / 10, 8, i / 10, cls);
}
function circlePath(cu, cv, r) {
  let d = "";
  for (let i = 0; i < 72; i++) {
    const t = i * Math.PI / 36;
    const p = project(cu + r * Math.cos(t), cv + r * Math.sin(t));
    d += (i ? "L" : "M") + p[0].toFixed(1) + " " + p[1].toFixed(1);
  }
  return d + "z";
}
const solid = svg(scene, "g", { transform: `translate(${-ox} ${-oy})` });
svg(solid, "path", { d: "M153 275L192 374.500C235 377 265 358 282 335L257 233C240 253 200 277 153 275z", fill: "url(#bodyFill)" });
svg(solid, "path", { d: "M153 275C157 247 190 216 228 207Q245 216 257 233C240 253 200 277 153 275z", fill: "#8f383f" });
svg(solid, "path", { class: "edge", d: "M153 275C157 247 190 216 228 207Q245 216 257 233C240 253 200 277 153 275L192 374.500C235 377 265 358 282 335L257 233" });
svg(solid, "path", { class: "edge", opacity: .6, d: "M228 207L258 311" });
svg(solid, "path", { d: "M200 270L235 374M182 366L270 339", stroke: "#2b2226", opacity: .2 });
[[1.005, 1.42], [0.83, 0.93], [1.3, 0.645]].forEach(c => svg(scene, "path", { class: "ring", d: circlePath(c[0], c[1], 0.65) }));
svg(solid, "path", { d: "M132 492L35 99", stroke: "#3d9a40", "stroke-width": 1.4 });
svg(solid, "path", { d: "M132 492L391 402", stroke: "#9c2f35", "stroke-width": 1.2 });
svg(solid, "path", { d: "M49 539L54 547L69 542M54 547V539", stroke: "#666c74", fill: "none" });
svg(solid, "text", { x: 48, y: 538 }, "y");
svg(solid, "text", { x: 55, y: 538 }, "z");
svg(solid, "text", { x: 70, y: 543 }, "x");

/* Node canvas */
const canvas = document.getElementById("canvas");
const wires = document.getElementById("wires");
const cx = 391, cy = 93;
for (let i = 0; i < 30; i++) {
  const x = Math.round(435.5 + i * 73.5 - cx) + .5;
  svg(wires, "line", { x1: x, x2: x, y1: 0, y2: "100%", class: "grid-line" });
}
for (let i = 0; i < 50; i++) {
  const y = Math.round(103 + i * 24.5 - cy) + .5;
  svg(wires, "line", { y1: y, y2: y, x1: 0, x2: "100%", class: "grid-line" });
}
const ports = [];
function wire(x1, y1, x2, y2) {
  const dx = Math.abs(x2 - x1) * .5 + Math.abs(y2 - y1) * .17;
  const p = [x1 - cx, y1 - cy, x1 + dx - cx, y1 - cy, x2 - dx - cx, y2 - cy, x2 - cx, y2 - cy];
  svg(wires, "path", { class: "wire", d: `M${p[0]} ${p[1]}C${p[2]} ${p[3]} ${p[4]} ${p[5]} ${p[6]} ${p[7]}` });
}
function port(x, y) { ports.push([x - cx, y - cy]); }
function place(cls, x, y, html) {
  const n = document.createElement("div");
  n.className = "node " + cls;
  n.style.left = x - cx + "px";
  n.style.top = y - cy + "px";
  n.innerHTML = html;
  canvas.appendChild(n);
}
function component(cls, x, y, name, ins, outs) {
  const h = cls.includes("tall") ? 40 : cls.includes("mid") ? 20 : 13;
  const col = a => `<div class="side">${a.map(t => `<span>${t}</span>`).join("")}</div>`;
  place(cls, x, y, col(ins) + `<div class="core"><b>${name}</b></div>` + col(outs));
  ins.forEach((t, i) => port(x, y + 1 + h * (i + .5) / ins.length));
  outs.forEach((t, i) => port(x + 33, y + 1 + h * (i + .5) / outs.length));
}
function group(dx, dy, id) {
  wire(434 + dx, 182 + dy, 526 + dx, 181 + dy);
  [191, 201, 211].forEach(y => wire(492 + dx, 204 + dy, 526 + dx, y + dy));
  wire(492 + dx, 204 + dy, 527 + dx, 233 + dy);
  wire(560 + dx, 186 + dy, 592 + dx, 187 + dy);
  wire(619 + dx, 187 + dy, 651 + dx, 186 + dy);
  wire(561 + dx, 233 + dy, 651 + dx, 196 + dy);
  place("param", 407 + dx, 176 + dy, "Pt");
  port(407 + dx, 182 + dy); port(434 + dx, 182 + dy);
  place("slider", 408 + dx, 198 + dy, `<label for="s${id}">Y Size</label><div class="track"><input id="s${id}" type="range" min="0" max="21" value="13"><output for="s${id}">13</output></div>`);
  port(492 + dx, 204 + dy);
  component("tall light", 527 + dx, 175 + dy, "Rectangle", ["P", "X", "Y", "R"], ["R", "L"]);
  component("short", 528 + dx, 225 + dy, "Z", ["F"], ["V"]);
  place("param", 592 + dx, 181 + dy, "Srf");
  port(592 + dx, 187 + dy); port(619 + dx, 187 + dy);
  component("mid", 652 + dx, 180 + dy, "Extr", ["B", "D"], ["E"]);
}
svg(wires, "circle", { class: "halo", cx: 751 - cx, cy: 243 - cy, r: 24 });
svg(wires, "circle", { class: "halo", cx: 956 - cx, cy: 426 - cy, r: 24 });
wire(382, 177, 407, 182);
wire(376, 317, 404, 311);
group(0, 0, 1);
group(-3, 129, 2);
group(195, 261, 3);
wire(686, 191, 733, 238);
wire(682, 320, 733, 248);
wire(768, 243, 939, 421);
wire(881, 452, 939, 431);
wire(556, 516, 602, 443);
component("mid", 734, 232, "SInt", ["A", "B"], ["R"]);
component("mid light", 939, 415, "SInt", ["A", "B"], ["R"]);
port(556, 516);
let lines = "";
for (let i = 1; i < 8; i++) lines += `M${8 + i * 6} 6V53M6 ${6 + i * 6}H55`;
place("pad", 489, 484, `<svg viewBox="0 0 60 60"><rect x="0" y="0" width="60" height="60" fill="#d3d5df" stroke="#333" stroke-width="2"/>
<path d="${lines}" stroke="#aeb2c2" fill="none"/><rect x="6" y="6" width="49" height="47" fill="none" stroke="#333" stroke-dasharray="1 1"/>
<path d="M1 51l4 2-4 2zM34 58l2.500-4 2.500 4z" fill="#000"/><circle cx="36.500" cy="53" r="2" fill="#fff" stroke="#111"/>
<rect x="26" y="43" width="21" height="6" fill="#fff" stroke="#333"/><text x="28" y="48">0.51, 0.0</text></svg>`);
ports.forEach(p => svg(wires, "circle", { class: "port", cx: p[0], cy: p[1], r: 2 }));
```
